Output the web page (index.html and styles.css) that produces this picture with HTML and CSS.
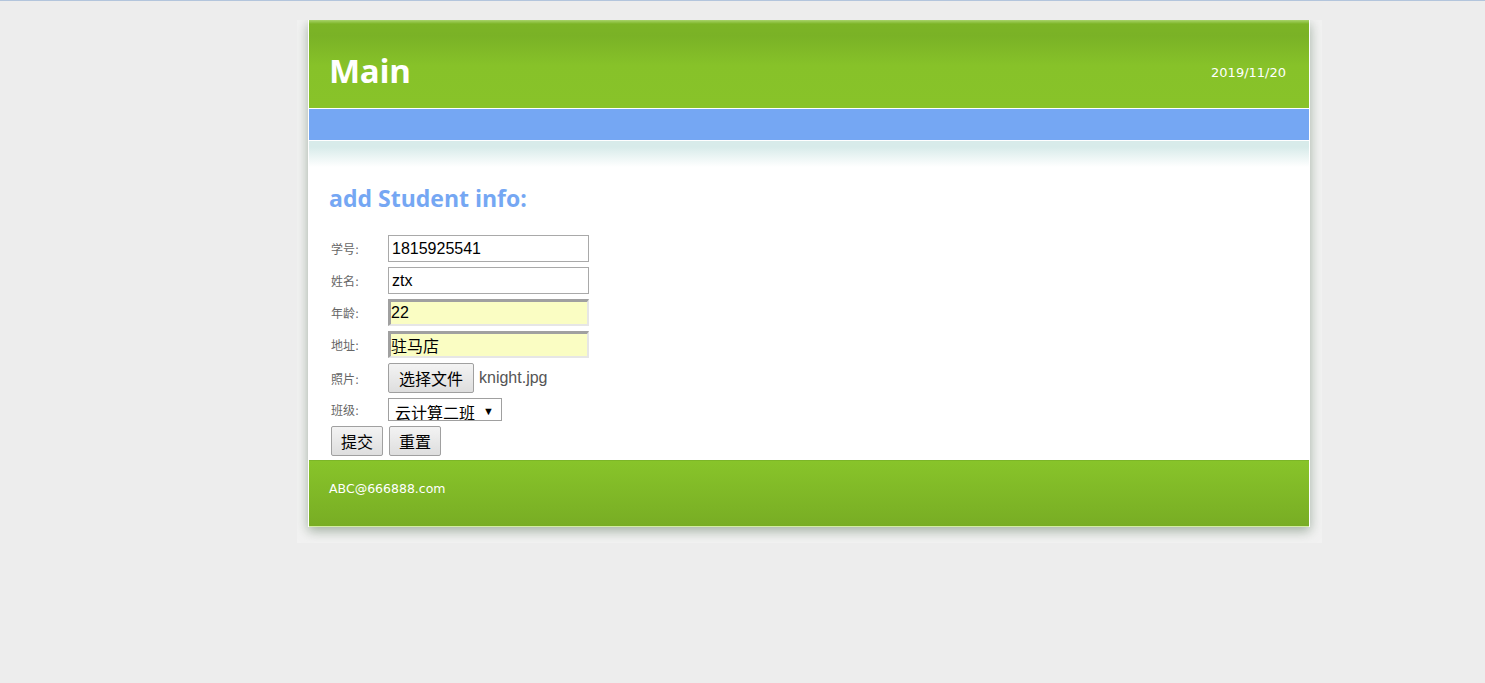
FILE: index.html
```html
<!DOCTYPE html>
<html lang="zh-CN">
<head>
    <meta charset="UTF-8">
    <title>Main</title>
    <link rel="stylesheet" href="styles.css">
</head>
<body>

<div class="wrap">
    <div class="container">
        <div class="header">
            <h1>Main</h1>
            <span class="date">2019/11/20</span>
        </div>
        <div class="nav"></div>

        <div class="content">
            <h2>add Student info:</h2>
            <form class="student-form">
                <div class="row">
                    <label>学号:</label>
                    <input type="text" class="field" value="1815925541">
                </div>
                <div class="row">
                    <label>姓名:</label>
                    <input type="text" class="field" value="ztx">
                </div>
                <div class="row">
                    <label>年龄:</label>
                    <input type="text" class="field inset" value="22">
                </div>
                <div class="row">
                    <label>地址:</label>
                    <input type="text" class="field inset" value="驻马店">
                </div>
                <div class="row">
                    <label>照片:</label>
                    <button type="button" class="btn">选择文件</button>
                    <span class="file-name">knight.jpg</span>
                </div>
                <div class="row">
                    <label>班级:</label>
                    <div class="fake-select">云计算二班<span class="arrow">▼</span></div>
                </div>
                <div class="actions">
                    <button type="submit" class="btn">提交</button>
                    <button type="reset" class="btn">重置</button>
                </div>
            </form>
        </div>

        <div class="footer">ABC@666888.com</div>
    </div>
</div>

</body>
</html>
```

FILE: styles.css
```css
* {
    box-sizing: border-box;
    margin: 0;
    padding: 0;
}

body {
    background-color: #ededed;
    border-top: 1px solid #b3c5dc;
    font-family: "DejaVu Sans", "Noto Sans CJK SC", sans-serif;
}

.wrap {
    width: 1025px;
    margin: 19px 0 0 297px;
    padding: 0 12px 16px 11px;
    background: #f2f2f2;
    overflow: hidden;
}

.container {
    width: 1002px;
    background: white;
    border-left: 1px solid white;
    border-right: 1px solid white;
    box-shadow: 0px 4px 11px rgba(95, 120, 95, 0.55);
}

.header {
    height: 89px;
    display: flex;
    align-items: center;
    justify-content: space-between;
    padding: 12px 23px 0 20px;
    border-bottom: 1px solid white;
    background: linear-gradient(#a9d46b 0, #7cb426 4px, #7ab226 16px, #87c229 46px, #88c329 100%);
    color: white;
}

.header h1 {
    font-family: "Open Sans", sans-serif;
    font-size: 33px;
    font-weight: bold;
    letter-spacing: -0.3px;
}

.date {
    font-size: 13px;
    padding-top: 4px;
}

.nav {
    height: 32px;
    background: #75a7f3;
    border-bottom: 1px solid white;
}

.content {
    height: 319px;
    padding: 0 20px;
    background: linear-gradient(#d8ebea 0, #d8ebea 6px, white 26px);
}

.content h2 {
    font-family: "Open Sans", sans-serif;
    font-size: 23px;
    line-height: 30px;
    color: #75a7f3;
    padding-top: 42px;
    margin-bottom: 22px;
}

.student-form {
    padding-left: 2px;
}

.row {
    display: flex;
    align-items: center;
    margin-bottom: 5px;
}

.row label {
    width: 57px;
    font-size: 12px;
    color: #666;
}

.field {
    width: 201px;
    height: 27px;
    padding: 0 3px;
    border: 1px solid #a9a9a9;
    font-family: "Liberation Sans", "Noto Sans CJK SC", sans-serif;
    font-size: 16px;
    color: black;
}

.field.inset {
    padding: 0;
    border-style: solid;
    border-width: 3px 2px 2px 3px;
    border-color: #a0a0a0 #e6e6e6 #e6e6e6 #a0a0a0;
    background: #fafdc3;
}

.btn {
    height: 30px;
    padding: 0 10px;
    border: 1px solid #a0a0a0;
    border-radius: 2px;
    background: linear-gradient(#f3f3f3, #dedede);
    font-family: "Liberation Sans", "Noto Sans CJK SC", sans-serif;
    font-size: 16px;
    color: black;
}

.actions .btn {
    padding: 0 9px;
}

.file-name {
    margin-left: 5px;
    font-family: "Liberation Sans", sans-serif;
    font-size: 16px;
    color: #555;
}

.fake-select {
    width: 114px;
    height: 23px;
    padding-left: 6px;
    border: 1px solid #a0a0a0;
    overflow: hidden;
    font-family: "Liberation Sans", "Noto Sans CJK SC", sans-serif;
    font-size: 16px;
    line-height: 24px;
    white-space: nowrap;
}

.arrow {
    font-size: 11px;
    margin-left: 8px;
    vertical-align: 4px;
}

.actions {
    display: flex;
    gap: 6px;
    margin-bottom: 4px;
}

.footer {
    height: 67px;
    padding: 20px 20px 0;
    border-top: 1px solid #7cb628;
    border-bottom: 1px solid #d3eda2;
    background: linear-gradient(#88c42a, #78ad24);
    color: white;
    font-size: 12.5px;
}
```
